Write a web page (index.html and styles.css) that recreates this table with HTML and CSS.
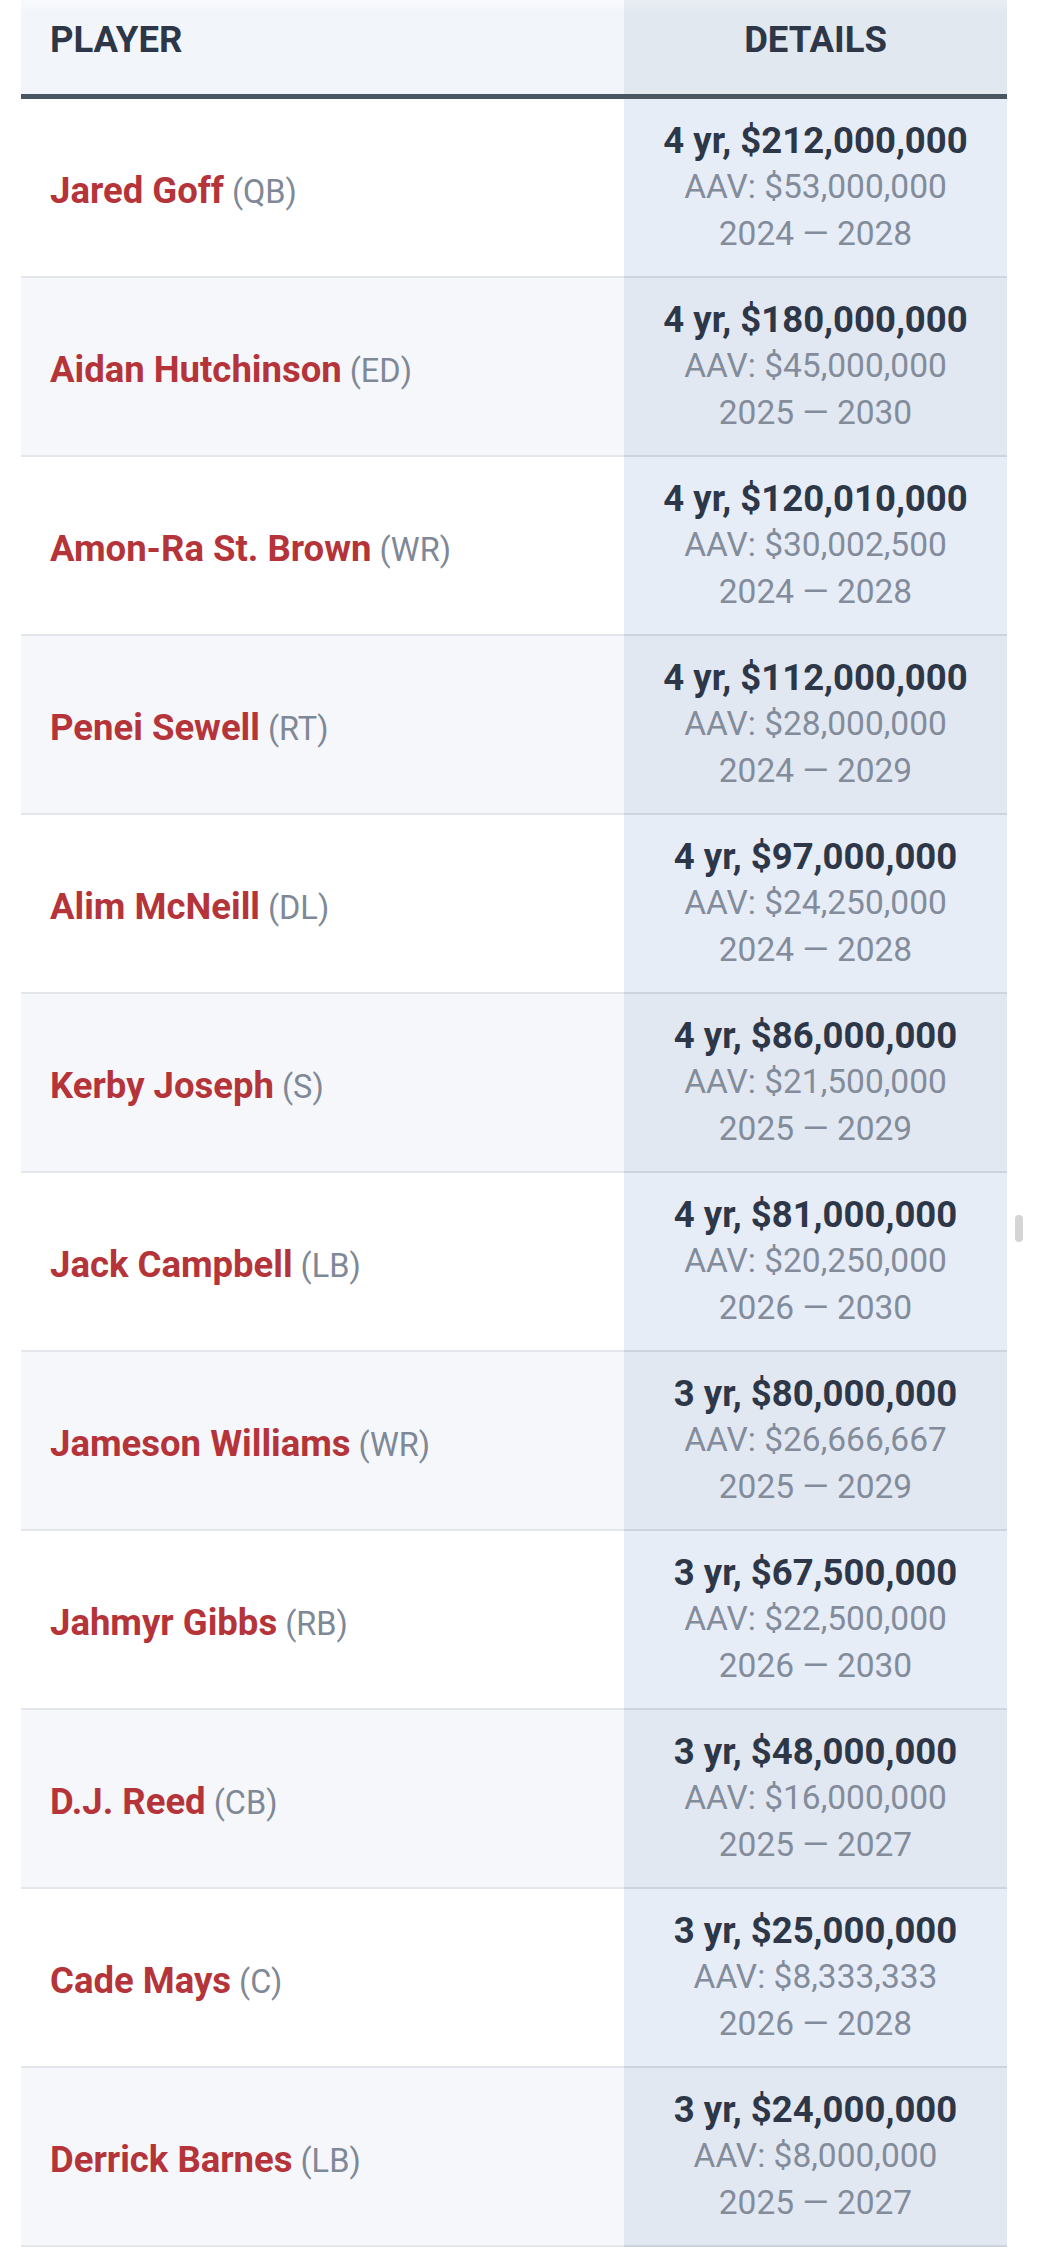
FILE: index.html
```html
<!DOCTYPE html>
<html lang="en">
<head>
<meta charset="utf-8">
<title>Contracts</title>
<link rel="stylesheet" href="styles.css">
</head>
<body>
<div class="wrap">
<table class="contracts">
  <thead>
    <tr><th class="c-player">Player</th><th class="c-details">Details</th></tr>
  </thead>
  <tbody>
    <tr><td class="c-player"><span class="name">Jared Goff</span> <span class="pos">(QB)</span></td><td class="c-details"><div class="deal">4 yr, $212,000,000</div><div class="sub">AAV: $53,000,000</div><div class="sub">2024 — 2028</div></td></tr>
    <tr><td class="c-player"><span class="name">Aidan Hutchinson</span> <span class="pos">(ED)</span></td><td class="c-details"><div class="deal">4 yr, $180,000,000</div><div class="sub">AAV: $45,000,000</div><div class="sub">2025 — 2030</div></td></tr>
    <tr><td class="c-player"><span class="name">Amon-Ra St. Brown</span> <span class="pos">(WR)</span></td><td class="c-details"><div class="deal">4 yr, $120,010,000</div><div class="sub">AAV: $30,002,500</div><div class="sub">2024 — 2028</div></td></tr>
    <tr><td class="c-player"><span class="name">Penei Sewell</span> <span class="pos">(RT)</span></td><td class="c-details"><div class="deal">4 yr, $112,000,000</div><div class="sub">AAV: $28,000,000</div><div class="sub">2024 — 2029</div></td></tr>
    <tr><td class="c-player"><span class="name">Alim McNeill</span> <span class="pos">(DL)</span></td><td class="c-details"><div class="deal">4 yr, $97,000,000</div><div class="sub">AAV: $24,250,000</div><div class="sub">2024 — 2028</div></td></tr>
    <tr><td class="c-player"><span class="name">Kerby Joseph</span> <span class="pos">(S)</span></td><td class="c-details"><div class="deal">4 yr, $86,000,000</div><div class="sub">AAV: $21,500,000</div><div class="sub">2025 — 2029</div></td></tr>
    <tr><td class="c-player"><span class="name">Jack Campbell</span> <span class="pos">(LB)</span></td><td class="c-details"><div class="deal">4 yr, $81,000,000</div><div class="sub">AAV: $20,250,000</div><div class="sub">2026 — 2030</div></td></tr>
    <tr><td class="c-player"><span class="name">Jameson Williams</span> <span class="pos">(WR)</span></td><td class="c-details"><div class="deal">3 yr, $80,000,000</div><div class="sub">AAV: $26,666,667</div><div class="sub">2025 — 2029</div></td></tr>
    <tr><td class="c-player"><span class="name">Jahmyr Gibbs</span> <span class="pos">(RB)</span></td><td class="c-details"><div class="deal">3 yr, $67,500,000</div><div class="sub">AAV: $22,500,000</div><div class="sub">2026 — 2030</div></td></tr>
    <tr><td class="c-player"><span class="name">D.J. Reed</span> <span class="pos">(CB)</span></td><td class="c-details"><div class="deal">3 yr, $48,000,000</div><div class="sub">AAV: $16,000,000</div><div class="sub">2025 — 2027</div></td></tr>
    <tr><td class="c-player"><span class="name">Cade Mays</span> <span class="pos">(C)</span></td><td class="c-details"><div class="deal">3 yr, $25,000,000</div><div class="sub">AAV: $8,333,333</div><div class="sub">2026 — 2028</div></td></tr>
    <tr><td class="c-player"><span class="name">Derrick Barnes</span> <span class="pos">(LB)</span></td><td class="c-details"><div class="deal">3 yr, $24,000,000</div><div class="sub">AAV: $8,000,000</div><div class="sub">2025 — 2027</div></td></tr>
  </tbody>
</table>
</div>
<div class="scroll-thumb"></div>
</body>
</html>
```

FILE: styles.css
```css
html, body {
  margin: 0;
  padding: 0;
  background: #ffffff;
}
body {
  font-family: Roboto, "Noto Sans", Arial, sans-serif;
  color: #2d3748;
  height: 2247px;
  overflow: hidden;
}
.wrap {
  padding-left: 21px;
  width: 986px;
}
.contracts {
  width: 986px;
  border-collapse: collapse;
  table-layout: fixed;
}
.contracts th {
  font-size: 36.5px;
  font-weight: 700;
  text-transform: uppercase;
  line-height: 46px;
  color: #2d3748;
  padding: 17px 0 31px;
  border-bottom: 5px solid #4a5563;
  height: 46px;
  vertical-align: top;
}
.contracts th.c-player {
  width: 603px;
  text-align: left;
  padding-left: 29px;
  box-sizing: border-box;
  background: linear-gradient(#f8fafc 0, #f2f5f9 14px, #f2f5f9 100%);
}
.contracts th.c-details {
  text-align: center;
  background: linear-gradient(#e8edf3 0, #e2e8f0 14px, #e2e8f0 100%);
}
.contracts td {
  padding: 19px 0;
  height: 139px;
  vertical-align: middle;
  border-bottom: 2px solid #e3e7ec;
}
.contracts td.c-player {
  padding: 26px 0 12px 29px;
  background: #ffffff;
  line-height: 46px;
}
.contracts td.c-details {
  text-align: center;
  background: #e7edf7;
  border-bottom-color: #cdd4de;
}
.contracts tbody tr:nth-child(even) td.c-player {
  background: #f5f7fa;
}
.contracts tbody tr:nth-child(even) td.c-details {
  background: #e2e8f1;
}
.name {
  font-size: 36.5px;
  font-weight: 700;
  color: #b5343a;
}
.pos {
  font-size: 32.5px;
  font-weight: 400;
  color: #7f8897;
  margin-left: 4px;
}
.deal {
  font-size: 36.5px;
  font-weight: 700;
  line-height: 46px;
  color: #2d3748;
}
.sub {
  font-size: 33.5px;
  font-weight: 400;
  line-height: 46.5px;
  color: #838c9b;
}
.scroll-thumb {
  position: absolute;
  left: 1015px;
  top: 1215px;
  width: 8px;
  height: 27px;
  border-radius: 4px;
  background: #d5d5d5;
}
```
